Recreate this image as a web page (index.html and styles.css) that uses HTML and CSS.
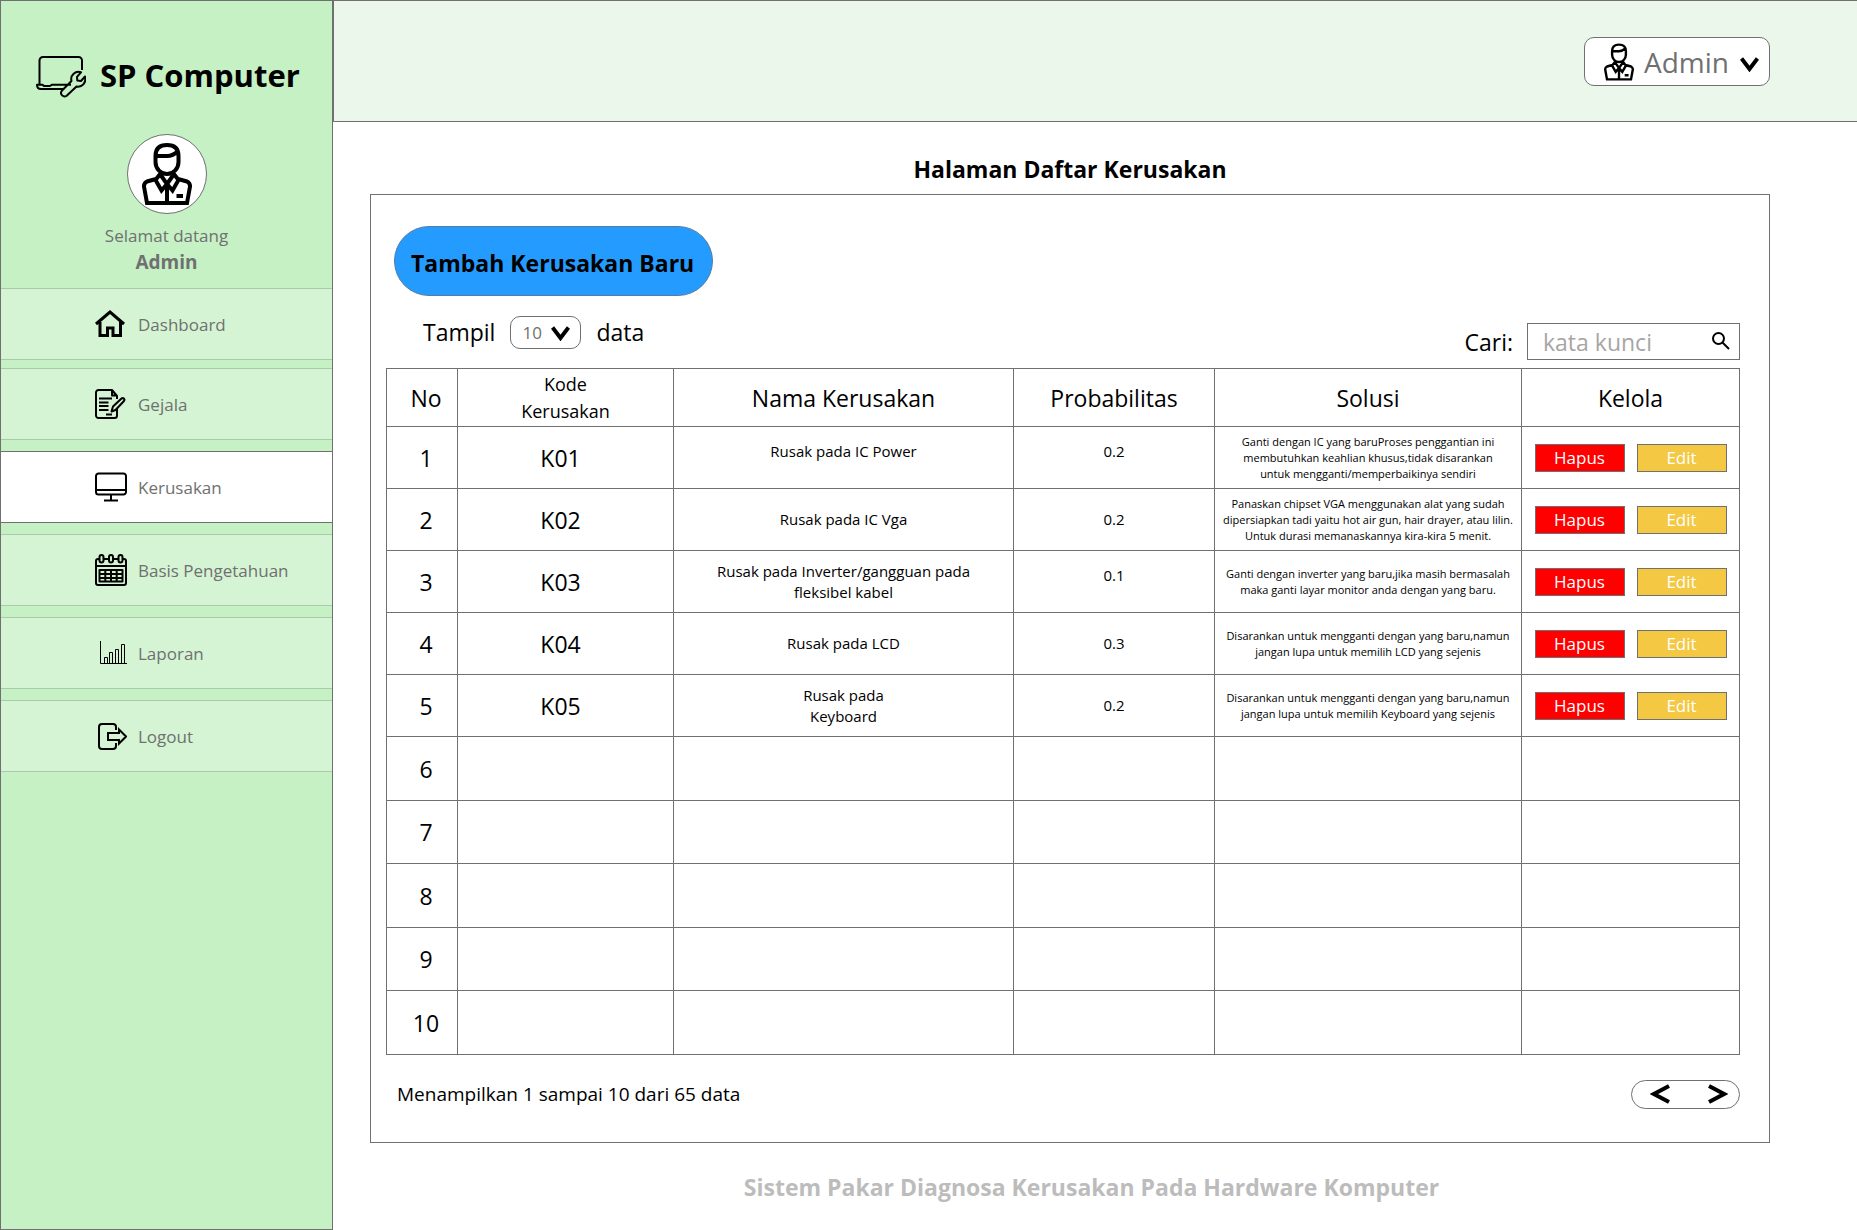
FILE: index.html
```html
<!DOCTYPE html>
<html lang="id">
<head>
<meta charset="utf-8">
<meta name="viewport" content="width=device-width, initial-scale=1">
<title>SP Computer - Daftar Kerusakan</title>
<link rel="stylesheet" href="styles.css">
</head>
<body>
<svg class="sprite" aria-hidden="true">
  <symbol id="person" viewBox="0 0 50 62">
    <path d="M13.5 13C13.5 5 18 2 25 2S36.5 5 36.5 13V19C36.5 26 31 31 25 31S13.5 26 13.5 19ZM13.5 13H25C31 13 34 10 36 8M14 36L5 38.5Q1.8 40 2 43.500L5 60H45L48 43.500Q48.200 40 45 38.500L36 36M18.500 30.500L13.500 37L19.500 47.500L25 41L19 32.500M31.500 30.500L36.500 37L30.500 47.500L25 41L31 32.500M25 41V60M34.500 53H41"/>
  </symbol>
  <symbol id="chevron" viewBox="0 0 19 15">
    <path d="M1.500 1.500L9.500 12L17.500 1.500"/>
  </symbol>
</svg>
<div class="layout">
  <aside class="sidebar">
    <div class="brand">
      <svg class="brand-icon" width="50" height="42" viewBox="0 0 50 42" aria-hidden="true">
        <path d="M46 14V4.500A3.500 3.500 0 0 0 42.500 1H7A3.500 3.500 0 0 0 3.500 4.500V28M35 28.700H16L14 30H8L6.500 28.700H1Q1 33 5 33H28.500M45 16.300C39.500 14.500 34 19 35.500 25L25.800 34.800A3.500 3.500 0 0 0 30.700 39.700L40.500 30.500C46.500 31.500 50.500 26.500 49 20.500L45 25L41.300 24.500L41 20.800Z"/>
      </svg>
      <span class="brand-name">SP Computer</span>
    </div>
    <div class="profile">
      <span class="avatar"><svg class="person" width="50" height="62" aria-hidden="true"><use href="#person"/></svg></span>
      <span class="greeting">Selamat datang</span>
      <strong class="profile-name">Admin</strong>
    </div>
    <nav class="nav">
      <a class="nav-item nav-home" href="#">
        <span class="nav-icon"><svg width="32" height="28" viewBox="0 0 32 28" aria-hidden="true"><path class="bold" d="M1 14L15 2L29 14M5 12V25.500H12.500V18H18V25.500H25.500V12"/></svg></span>Dashboard</a>
      <a class="nav-item" href="#">
        <span class="nav-icon"><svg width="32" height="30" viewBox="0 0 32 30" aria-hidden="true"><path d="M22 10V7L17 1H3.500A2.500 2.500 0 0 0 1 3.500V26.500A2.500 2.500 0 0 0 3.500 29H19.500A2.500 2.500 0 0 0 22 26.500V19M17 1V6.500H22M4 9.500H17M4 13.500H13.500M4 17H13.500M4 21H13.500M11 25.500H17M16.500 22.500L18 17.500L26.500 9.500Q28.500 8.500 29.500 10.500Q29.500 11.500 28.500 12.500L20.500 21Z"/></svg></span>Gejala</a>
      <a class="nav-item active" href="#" aria-current="page">
        <span class="nav-icon"><svg width="32" height="30" viewBox="0 0 32 30" aria-hidden="true"><path d="M3.500 1.500H28.500A2.500 2.500 0 0 1 31 4V20A2.500 2.500 0 0 1 28.500 22.500H3.500A2.500 2.500 0 0 1 1 20V4A2.500 2.500 0 0 1 3.500 1.500ZM1 18H31M16 22.500V28M9 28.500H23"/></svg></span>Kerusakan</a>
      <a class="nav-item" href="#">
        <span class="nav-icon"><svg width="32" height="32" viewBox="0 0 32 32" aria-hidden="true"><path d="M4.500 5H3A2 2 0 0 0 1 7V29A2 2 0 0 0 3 31H29A2 2 0 0 0 31 29V7A2 2 0 0 0 29 5H27.500M8.500 5H14M18 5H23.500M1 12H31M4.500 16H27.500V27.500H4.500ZM4.500 20H27.500M4.500 24H27.500M10.300 16V27.500M16 16V27.500M21.700 16V27.500"/><rect x="4.500" y="1" width="4" height="7.500" rx="2"/><rect x="14" y="1" width="4" height="7.500" rx="2"/><rect x="23.500" y="1" width="4" height="7.500" rx="2"/></svg></span>Basis Pengetahuan</a>
      <a class="nav-item" href="#">
        <span class="nav-icon"><svg width="27" height="24" viewBox="0 0 27 24" aria-hidden="true"><path class="thin" d="M.500 0V22.500H27M4.500 22.500V16.500H7.500V22.500M9.500 22.500V11.500H12.500V22.500M15.500 22.500V8.500H18.500V22.500M21.500 22.500V3.500H24.500V22.500"/></svg></span>Laporan</a>
      <a class="nav-item" href="#">
        <span class="nav-icon"><svg width="29" height="27" viewBox="0 0 29 27" aria-hidden="true"><path class="mid" d="M18 7V4A3 3 0 0 0 15 1H4A3 3 0 0 0 1 4V23A3 3 0 0 0 4 26H15A3 3 0 0 0 18 23V20M10 10H21V6.500L28 13.500L21 20.500V17H10Z"/></svg></span>Logout</a>
    </nav>
  </aside>
  <div class="content">
    <header class="topbar">
      <div class="account">
        <svg class="person account-icon" width="30" height="38" aria-hidden="true"><use href="#person"/></svg>
        <select class="account-select" aria-label="Akun"><option>Admin</option></select>
        <svg class="chevron account-chevron" width="19" height="15" aria-hidden="true"><use href="#chevron"/></svg>
      </div>
    </header>
    <main class="main">
      <h1 class="title">Halaman Daftar Kerusakan</h1>
      <section class="panel">
        <button class="add" type="button">Tambah Kerusakan Baru</button>
        <div class="toolbar">
          <div class="length">
            <label for="length">Tampil</label>
            <span class="length-box">
              <select class="length-select" id="length"><option>10</option></select>
              <svg class="chevron length-chevron" width="19" height="15" aria-hidden="true"><use href="#chevron"/></svg>
            </span>
            <span>data</span>
          </div>
          <div class="search">
            <label for="search">Cari:</label>
            <span class="search-box">
              <input class="search-input" id="search" type="text" placeholder="kata kunci">
              <svg class="search-icon" width="18" height="18" viewBox="0 0 18 18" aria-hidden="true"><circle cx="6.500" cy="6.500" r="5.500"/><path d="M10.500 10.500L17 17"/></svg>
            </span>
          </div>
        </div>
        <table class="table">
          <colgroup><col class="c-no"><col class="c-code"><col class="c-name"><col class="c-prob"><col class="c-sol"><col class="c-act"></colgroup>
          <thead>
            <tr><th>No</th><th class="small-head">Kode<br>Kerusakan</th><th>Nama Kerusakan</th><th>Probabilitas</th><th>Solusi</th><th>Kelola</th></tr>
          </thead>
          <tbody class="filled">
            <tr><td>1</td><td>K01</td><td class="text top">Rusak pada IC Power</td><td class="text top">0.2</td><td class="note">Ganti dengan IC yang baruProses penggantian ini<br>membutuhkan keahlian khusus,tidak disarankan<br>untuk mengganti/memperbaikinya sendiri</td><td><div class="actions"><button class="act delete" type="button">Hapus</button><button class="act edit" type="button">Edit</button></div></td></tr>
            <tr><td>2</td><td>K02</td><td class="text">Rusak pada IC Vga</td><td class="text">0.2</td><td class="note">Panaskan chipset VGA menggunakan alat yang sudah<br>dipersiapkan tadi yaitu hot air gun, hair drayer, atau lilin.<br>Untuk durasi memanaskannya kira-kira 5 menit.</td><td><div class="actions"><button class="act delete" type="button">Hapus</button><button class="act edit" type="button">Edit</button></div></td></tr>
            <tr><td>3</td><td>K03</td><td class="text">Rusak pada Inverter/gangguan pada<br>fleksibel kabel</td><td class="text top">0.1</td><td class="note">Ganti dengan inverter yang baru,jika masih bermasalah<br>maka ganti layar monitor anda dengan yang baru.</td><td><div class="actions"><button class="act delete" type="button">Hapus</button><button class="act edit" type="button">Edit</button></div></td></tr>
            <tr><td>4</td><td>K04</td><td class="text">Rusak pada LCD</td><td class="text">0.3</td><td class="note">Disarankan untuk mengganti dengan yang baru,namun<br>jangan lupa untuk memilih LCD yang sejenis</td><td><div class="actions"><button class="act delete" type="button">Hapus</button><button class="act edit" type="button">Edit</button></div></td></tr>
            <tr><td>5</td><td>K05</td><td class="text">Rusak pada<br>Keyboard</td><td class="text">0.2</td><td class="note">Disarankan untuk mengganti dengan yang baru,namun<br>jangan lupa untuk memilih Keyboard yang sejenis</td><td><div class="actions"><button class="act delete" type="button">Hapus</button><button class="act edit" type="button">Edit</button></div></td></tr>
          </tbody>
          <tbody class="blank">
            <tr><td>6</td><td></td><td></td><td></td><td></td><td></td></tr>
            <tr><td>7</td><td></td><td></td><td></td><td></td><td></td></tr>
            <tr><td>8</td><td></td><td></td><td></td><td></td><td></td></tr>
            <tr><td>9</td><td></td><td></td><td></td><td></td><td></td></tr>
            <tr><td>10</td><td></td><td></td><td></td><td></td><td></td></tr>
          </tbody>
        </table>
        <div class="table-foot">
          <span>Menampilkan 1 sampai 10 dari 65 data</span>
          <div class="pager">
            <button class="page" type="button" aria-label="Sebelumnya"><svg width="20" height="20" viewBox="0 0 20 20" aria-hidden="true"><path d="M19 2L4 10L19 18"/></svg></button>
            <button class="page" type="button" aria-label="Berikutnya"><svg width="20" height="20" viewBox="0 0 20 20" aria-hidden="true"><path d="M1 2L16 10L1 18"/></svg></button>
          </div>
        </div>
      </section>
      <footer class="footer">Sistem Pakar Diagnosa Kerusakan Pada Hardware Komputer</footer>
    </main>
  </div>
</div>
</body>
</html>
```
FILE: styles.css
```css
* {
  box-sizing: border-box;
}

body {
  margin: 0;
  background: #fff;
  color: #000;
  font-family: "Open Sans", "Noto Sans", sans-serif;
  font-size: 23px;
}

button,
select,
input {
  font-family: inherit;
  color: inherit;
}

svg {
  display: block;
  flex: none;
  fill: none;
  stroke: #000;
}

.sprite {
  position: absolute;
  width: 0;
  height: 0;
}

.layout {
  display: flex;
  min-height: 100vh;
}

/* Sidebar */
.sidebar {
  flex: none;
  width: 333px;
  padding-top: 55px;
  border: 1px solid #707070;
  background: #c5f1c5;
}

.brand {
  display: flex;
  align-items: center;
  gap: 14px;
  height: 42px;
  padding-left: 35px;
}

.brand-icon {
  stroke-width: 2;
  stroke-linejoin: round;
}

.brand-name {
  padding-bottom: 4px;
  font-size: 31px;
  font-weight: 700;
  line-height: 40px;
}

.profile {
  display: flex;
  flex-direction: column;
  align-items: center;
  margin: 36px 0 13px;
  color: #707070;
  font-size: 17px;
  line-height: 26px;
}

.avatar {
  display: flex;
  align-items: center;
  justify-content: center;
  width: 80px;
  height: 80px;
  margin-bottom: 9px;
  border: 1px solid #707070;
  border-radius: 50%;
  background: #fff;
}

.person {
  stroke-width: 4;
}

.profile-name {
  font-size: 19px;
}

.nav {
  display: flex;
  flex-direction: column;
}

.nav-item {
  display: flex;
  align-items: center;
  gap: 11px;
  height: 72px;
  margin-bottom: 11px;
  padding-left: 94px;
  border: solid #a9cbab;
  border-width: 1px 0;
  background: #d4f4d4;
  color: #707070;
  font-size: 17px;
  text-decoration: none;
}

.nav-home {
  margin-bottom: 8px;
}

.nav-item.active {
  border-color: #707070;
  background: #fff;
}

.nav-icon {
  display: flex;
  justify-content: flex-end;
  width: 32px;
}

.nav-icon svg {
  stroke-width: 2;
  stroke-linejoin: round;
}

.nav-icon .bold {
  stroke-width: 3;
  stroke-linejoin: miter;
}

.nav-icon .mid {
  stroke-width: 2;
  stroke-linejoin: miter;
}

.nav-icon .thin {
  stroke-width: 1;
  stroke-linejoin: miter;
}

/* Top bar */
.content {
  flex: 1;
  min-width: 0;
}

.topbar {
  display: flex;
  justify-content: flex-end;
  align-items: flex-start;
  height: 122px;
  padding: 36px 87px 0 0;
  border: 1px solid #707070;
  border-right: 0;
  background: #ebf7ea;
}

.account {
  position: relative;
  width: 186px;
}

.account-select,
.length-select {
  appearance: none;
  display: block;
  width: 100%;
  border: 1px solid #707070;
  border-radius: 10px;
  background: #fff;
  color: #707070;
}

.account-select {
  height: 49px;
  padding: 0 0 0 59px;
  font-size: 28px;
}

.account-icon {
  position: absolute;
  top: 6px;
  left: 20px;
}

.chevron {
  position: absolute;
  stroke-width: 4;
  pointer-events: none;
}

.account-chevron {
  top: 20px;
  right: 11px;
}

/* Page */
.main {
  padding: 30px 87px 0 37px;
}

.title {
  margin: 0 0 8px;
  font-size: 23px;
  line-height: 34px;
  text-align: center;
}

.panel {
  padding: 31px 29px 33px 15px;
  border: 1px solid #707070;
}

.add {
  display: block;
  height: 70px;
  margin: 0 0 19px 8px;
  padding: 4px 18px 0 16px;
  border: 1px solid #5a7ba0;
  border-radius: 35px;
  background: #239bff;
  font-size: 23px;
  font-weight: 700;
}

.toolbar {
  display: flex;
  justify-content: space-between;
  height: 45px;
  margin-bottom: 8px;
  padding-left: 37px;
}

.length {
  display: flex;
  align-items: center;
  align-self: flex-start;
  gap: 15px;
  line-height: 34px;
}

.length-box {
  position: relative;
  width: 71px;
}

.length-select {
  height: 33px;
  padding: 0 0 0 11px;
  font-size: 17px;
}

.length-chevron {
  top: 10px;
  right: 11px;
}

.search {
  display: flex;
  align-items: center;
  align-self: flex-end;
  gap: 14px;
}

.search-box {
  position: relative;
  width: 213px;
}

.search-input {
  display: block;
  width: 100%;
  height: 37px;
  padding: 0 40px 0 15px;
  border: 1px solid #707070;
  font-size: 23px;
}

.search-input::placeholder {
  color: #a7a5a5;
  opacity: 1;
}

.search-icon {
  position: absolute;
  top: 9px;
  right: 10px;
  stroke-width: 2;
}

/* Table */
.table {
  width: 100%;
  border-collapse: collapse;
  table-layout: fixed;
  text-align: center;
}

.table th,
.table td {
  padding: 0;
  border: 1px solid #707070;
  font-weight: 400;
}

.table th {
  height: 58px;
}

.table tr > :first-child {
  padding-left: 8px;
}

.filled td:nth-child(2) {
  padding-right: 10px;
}

.c-no { width: 71px; }
.c-code { width: 216px; }
.c-name { width: 340px; }
.c-prob { width: 201px; }
.c-sol { width: 307px; }
.c-act { width: 218px; }

.table .small-head {
  font-size: 18px;
  line-height: 27px;
}

.filled td {
  height: 62px;
}

.blank td {
  height: 63px;
}

.blank tr:nth-child(odd) td {
  height: 64px;
}

.table .text {
  font-size: 15px;
  line-height: 21px;
}

.table .top {
  padding-top: 14px;
  vertical-align: top;
}

.table .note {
  font-size: 11px;
  line-height: 16px;
  white-space: nowrap;
}

.actions {
  display: flex;
  justify-content: center;
  gap: 12px;
}

.act {
  width: 90px;
  height: 28px;
  padding: 0;
  border: 1px solid #707070;
  color: #fff;
  font-size: 17px;
  line-height: 24px;
}

.delete {
  background: #f00;
}

.edit {
  background: #f4c842;
}

.table-foot {
  display: flex;
  justify-content: space-between;
  align-items: center;
  margin-top: 24px;
  padding-left: 11px;
  font-size: 19px;
  line-height: 30px;
}

.pager {
  display: flex;
  justify-content: space-between;
  width: 109px;
  height: 29px;
  padding: 0 11px 0 18px;
  border: 1px solid #707070;
  border-radius: 15px;
}

.page {
  padding: 0;
  border: 0;
  background: none;
}

.page svg {
  stroke-width: 4;
}

.footer {
  margin-top: 27px;
  padding-left: 43px;
  color: #bcbcbc;
  font-size: 23px;
  font-weight: 700;
  line-height: 34px;
  text-align: center;
}
```
